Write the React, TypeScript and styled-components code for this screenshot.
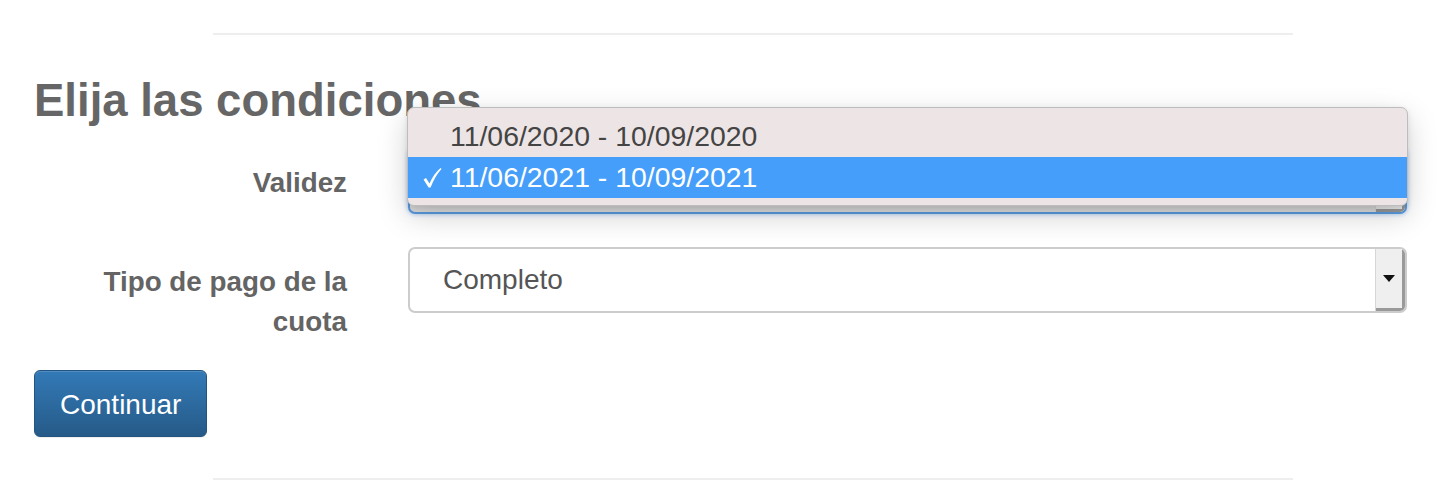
import React from "react";
import styled, { createGlobalStyle } from "styled-components";

const GlobalStyle = createGlobalStyle`
  html, body { margin: 0; padding: 0; background: #fff; }
  body { font-family: "Liberation Sans", Arial, Helvetica, sans-serif; }
  * { box-sizing: border-box; }
`;

const Page = styled.div`
  width: 1456px;
  height: 486px;
  overflow: hidden;
  padding-top: 33px;
`;

const Rule = styled.div`
  margin-left: 213px;
  width: 1080px;
  height: 2px;
  background: #eeeeee;
`;

const Content = styled.div`
  padding: 0 49px 0 34px;
`;

const Heading = styled.h2`
  margin: 41px 0 22px;
  font-size: 45.5px;
  line-height: 50px;
  font-weight: bold;
  color: #666;
`;

const FormRow = styled.div<{ $gap: number }>`
  display: grid;
  grid-template-columns: 313px 999px;
  column-gap: 61px;
  align-items: start;
  margin-bottom: ${(p) => p.$gap}px;
`;

const Label = styled.label`
  display: block;
  text-align: right;
  padding-top: 14.7px;
  font-size: 27.8px;
  line-height: 40px;
  font-weight: bold;
  color: #646464;
`;

const SelectWrap = styled.div`
  position: relative;
`;

const SelectBox = styled.div<{ $focused?: boolean }>`
  display: flex;
  height: 66px;
  border: 2px solid ${(p) => (p.$focused ? "#5a9be0" : "#cccccc")};
  border-radius: 7px;
  background: ${(p) => (p.$focused ? "#dedede" : "#fff")};
  box-shadow: ${(p) => (p.$focused ? "0 0 5px rgba(74,144,226,0.55)" : "none")};
  overflow: hidden;
`;

const SelectValue = styled.div<{ $hidden?: boolean }>`
  flex: 1;
  display: flex;
  align-items: center;
  padding-left: 33px;
  font-size: 28px;
  color: #555;
  visibility: ${(p) => (p.$hidden ? "hidden" : "visible")};
`;

const ArrowBox = styled.div`
  width: 30px;
  display: flex;
  align-items: center;
  justify-content: center;
  background: #efefef;
  border-left: 1px solid #d6d6d6;
  box-shadow: inset -3px -3px 0 #9a9a9a;
  padding: 0 3px 2px 0;
`;

const Menu = styled.div`
  position: absolute;
  top: -41px;
  left: -1px;
  right: -1px;
  padding: 8px 0 7px;
  background: #ede5e5;
  border: 1px solid #bdbdbd;
  border-radius: 7px;
  box-shadow: 0 10px 30px rgba(0, 0, 0, 0.18), 0 2px 6px rgba(0, 0, 0, 0.1);
  z-index: 2;
`;

const MenuItem = styled.div<{ $selected?: boolean }>`
  position: relative;
  height: 41px;
  display: flex;
  align-items: center;
  padding-left: 42px;
  font-size: 28.4px;
  color: ${(p) => (p.$selected ? "#fff" : "#444")};
  background: ${(p) => (p.$selected ? "#459ef9" : "transparent")};
`;

const CheckIcon = styled.svg`
  position: absolute;
  left: 14px;
  top: 10px;
`;

const Button = styled.button`
  display: block;
  padding: 13px 25px 11px;
  font-family: inherit;
  font-size: 28px;
  line-height: 41px;
  color: #fff;
  background: linear-gradient(to bottom, #337ab7 0%, #265a88 100%);
  border: 1px solid #245580;
  border-radius: 6px;
  box-shadow: inset 0 1px 0 rgba(255, 255, 255, 0.15), 0 1px 1px rgba(0, 0, 0, 0.075);
  margin-bottom: 41px;
`;

const Arrow = () => (
  <svg width="12" height="8" viewBox="0 0 12 8">
    <path d="M0 0 H12 L6 7 Z" fill="#111" />
  </svg>
);

const Check = () => (
  <CheckIcon width="20" height="22" viewBox="0 0 20 22">
    <path
      d="M1.5 12.5 L4 11 L7.5 16.5 Q11.5 7 18.5 1 L19.5 2 Q13 9 8.6 20.5 L6.6 20.5 Z"
      fill="#fff"
    />
  </CheckIcon>
);

export default function App() {
  return (
    <>
      <GlobalStyle />
      <Page>
        <Rule />
        <Content>
          <Heading>Elija las condiciones</Heading>
          <FormRow $gap={33}>
            <Label>Validez</Label>
            <SelectWrap>
              <SelectBox $focused>
                <SelectValue $hidden>11/06/2021 - 10/09/2021</SelectValue>
                <ArrowBox>
                  <Arrow />
                </ArrowBox>
              </SelectBox>
              <Menu>
                <MenuItem>11/06/2020 - 10/09/2020</MenuItem>
                <MenuItem $selected>
                  <Check />
                  11/06/2021 - 10/09/2021
                </MenuItem>
              </Menu>
            </SelectWrap>
          </FormRow>
          <FormRow $gap={28}>
            <Label>Tipo de pago de la cuota</Label>
            <SelectWrap>
              <SelectBox>
                <SelectValue>Completo</SelectValue>
                <ArrowBox>
                  <Arrow />
                </ArrowBox>
              </SelectBox>
            </SelectWrap>
          </FormRow>
          <Button>Continuar</Button>
        </Content>
        <Rule />
      </Page>
    </>
  );
}
